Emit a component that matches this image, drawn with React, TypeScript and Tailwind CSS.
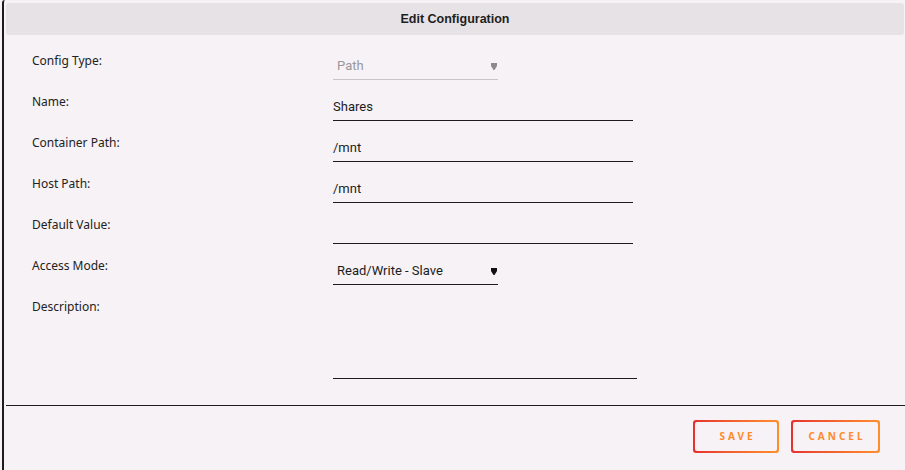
import React from "react";

type Field = {
  label: string;
  kind: "select" | "text" | "area";
  value?: string;
  disabled?: boolean;
};

const fields: Field[] = [
  { label: "Config Type:", kind: "select", value: "Path", disabled: true },
  { label: "Name:", kind: "text", value: "Shares" },
  { label: "Container Path:", kind: "text", value: "/mnt" },
  { label: "Host Path:", kind: "text", value: "/mnt" },
  { label: "Default Value:", kind: "text", value: "" },
  { label: "Access Mode:", kind: "select", value: "Read/Write - Slave" },
  { label: "Description:", kind: "area" },
];

const Caret = ({ muted }: { muted?: boolean }) => (
  <svg width="6" height="7" viewBox="0 0 6 7" className="shrink-0">
    <path d="M0 0H6V3L3.5 7H2.5L0 3Z" fill={muted ? "#8d8a8d" : "#111"} />
  </svg>
);

const GradientButton = ({ label, width }: { label: string; width: string }) => (
  <div className={`rounded-[3px] bg-gradient-to-r from-[#e62f2f] to-[#ff8e2c] p-[2px] ${width}`}>
    <div className="flex h-[29px] items-center justify-center rounded-[2px] bg-[#f6f2f5] pl-[0.3em] text-[10px] font-bold tracking-[0.3em] text-[#ff8a2c]">
      {label}
    </div>
  </div>
);

const App: React.FC = () => {
  return (
    <div className="h-[470px] w-[905px] overflow-hidden bg-[#f6f2f5] font-['Noto_Sans',sans-serif]">
      <div className="ml-[2px] h-full rounded-tl-[3px] border-l-2 border-[#1c1c1c] pt-[3px]">
        <div className="ml-[2px] mr-[1px] flex h-[32px] items-center justify-center rounded-[3px] bg-[#e7e2e6] font-['Liberation_Sans',sans-serif] text-[12.5px] font-bold text-[#1e1e1e]">
          Edit Configuration
        </div>

        <div className="mt-[14px] flex flex-col">
          {fields.map((f) => (
            <div key={f.label} className={`flex ${f.kind === "area" ? "h-[84px]" : "h-[41px]"}`}>
              <div className="w-[329px] shrink-0 pl-[28px] pt-[4px] text-[12px] leading-[16px] text-[#222]">
                {f.label}
              </div>
              {f.kind === "select" && (
                <div
                  className={`flex h-[31px] w-[165px] items-center justify-between border-b pl-[4px] pr-[1px] pt-[4px] font-['Roboto',sans-serif] text-[13px] ${
                    f.disabled ? "border-[#c9c5c9] text-[#9b989b]" : "border-[#1c1c1c] text-[#1c1c1c]"
                  }`}
                >
                  <span>{f.value}</span>
                  <Caret muted={f.disabled} />
                </div>
              )}
              {f.kind === "text" && (
                <div className="flex h-[31px] w-[300px] items-center border-b border-[#1c1c1c] pt-[4px] font-['Roboto',sans-serif] text-[13px] text-[#1c1c1c]">
                  {f.value}
                </div>
              )}
              {f.kind === "area" && <div className="h-[84px] w-[304px] border-b border-[#1c1c1c]" />}
            </div>
          ))}
        </div>

        <div className="ml-[2px] mt-[26px] border-t border-[#1c1c1c]" />

        <div className="mt-[14px] flex justify-end gap-[12px] pr-[25px]">
          <GradientButton label="SAVE" width="w-[86px]" />
          <GradientButton label="CANCEL" width="w-[89px]" />
        </div>
      </div>
    </div>
  );
};

export default App;
